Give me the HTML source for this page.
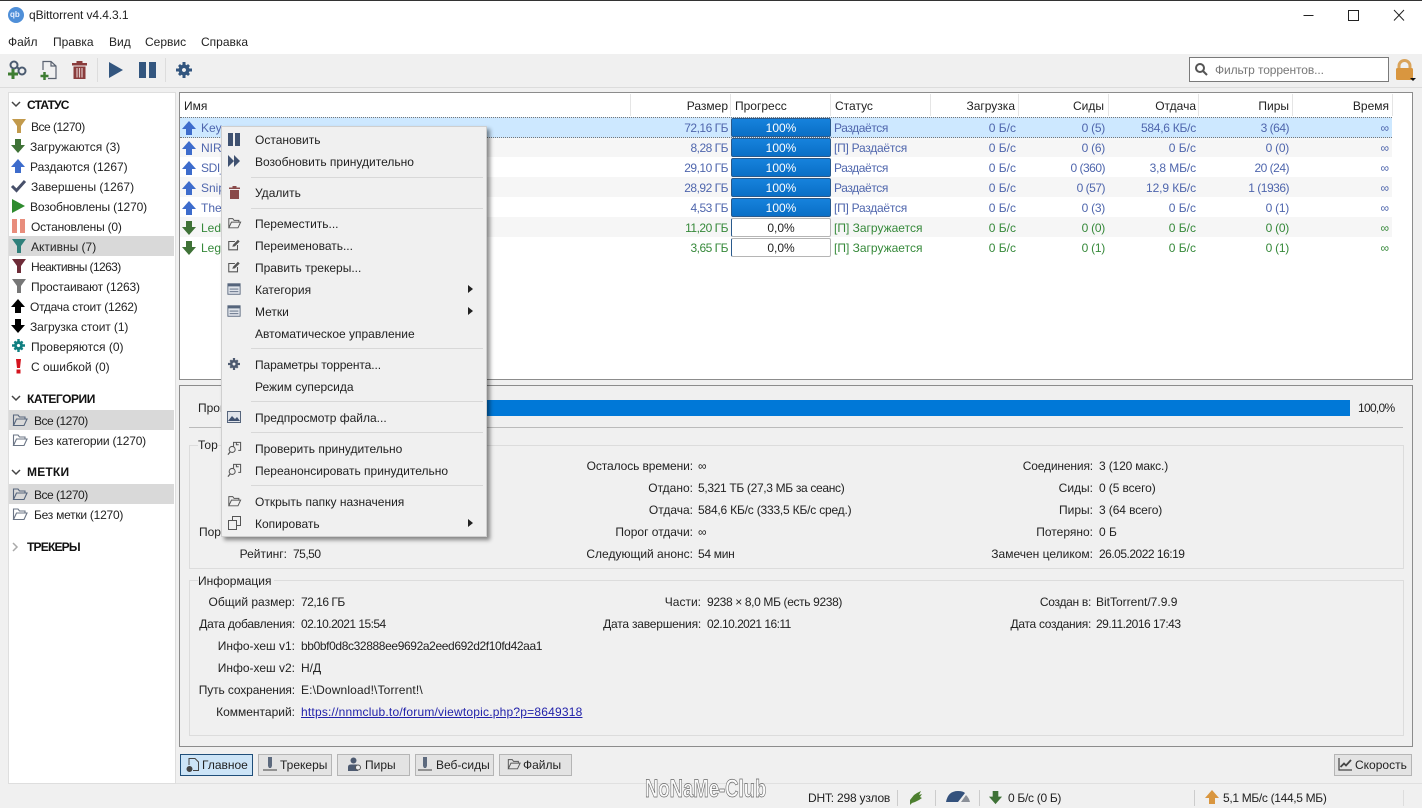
<!DOCTYPE html>
<html lang="ru"><head><meta charset="utf-8"><title>qBittorrent</title>
<style>
html,body{margin:0;padding:0}
body{width:1422px;height:808px;overflow:hidden;position:relative;background:#f0f0f0;font:12px/20px "Liberation Sans","DejaVu Sans",sans-serif;color:#222}
.t{position:absolute;white-space:nowrap;line-height:20px}
.r{text-align:right}
.b{position:absolute}
svg{position:absolute;overflow:visible}
.h{font-weight:bold;color:#111}
.bl{color:#4f66ad}.gr{color:#36893a}
.n{letter-spacing:-.5px}.m{letter-spacing:-.25px}
.sep{position:absolute;left:251px;width:232px;height:1px;background:#d8d8d8}
.btn{position:absolute;top:754px;height:20px;background:#e3e3e3;border:1px solid #b5b5b5}
.pb{position:absolute;left:731px;width:98px;height:17px;line-height:19px;background:linear-gradient(#1682dc,#0a6fc6);border:1px solid #2a5a8c;border-radius:2px;color:#fff;text-align:center}
.pw{position:absolute;left:731px;width:98px;height:17px;line-height:19px;background:#fff;border:1px solid #b5b5b5;border-left-color:#2a5a8c;border-radius:2px;color:#222;text-align:center}
</style></head><body>
<svg width="0" height="0" style="position:absolute"><defs>
<symbol id="up" viewBox="0 0 16 16"><path d="M8 1L15 9H11V15H5V9H1Z"/></symbol>
<symbol id="dn" viewBox="0 0 16 16"><path d="M5 1H11V7H15L8 15L1 7H5Z"/></symbol>
<symbol id="fu" viewBox="0 0 16 16"><path d="M1 1H15L10 8V15H6V8Z"/></symbol>
<symbol id="fo" viewBox="0 0 16 16"><path d="M1.500 13.500V3H6L7.500 5H13V7M1.500 13.500H12L15 7H4.500Z" fill="none" stroke-width="1.100"/></symbol>
<symbol id="ge" viewBox="0 0 16 16"><path d="M8 2.500A5.500 5.500 0 1 0 8.010 2.500ZM8 6A2 2 0 1 1 7.990 6Z" fill-rule="evenodd"/><path d="M6.500 0H9.500V3H6.500ZM6.500 13H9.500V16H6.500ZM0 6.500H3V9.500H0ZM13 6.500H16V9.500H13ZM2 4L4 2L6 4L4 6ZM10 4L12 2L14 4L12 6ZM2 12L4 10L6 12L4 14ZM10 12L12 10L14 12L12 14Z"/></symbol>
<symbol id="ed" viewBox="0 0 16 16"><path d="M12 8V13.500H2V4H9" fill="none" stroke="#555" stroke-width="1.200"/><path d="M6 10L7 7.500L12.500 2L14.500 4L9 9.500Z" fill="#555"/></symbol>
<symbol id="li" viewBox="0 0 16 16"><rect x="1" y="2" width="14" height="12" fill="#dfe3ea" stroke="#56657c"/><rect x="1" y="2" width="14" height="3" fill="#56657c"/><path d="M3 8H13M3 11H13" stroke="#56657c"/></symbol>
<symbol id="ck" viewBox="0 0 16 16"><path d="M10 1.500H14.500V10H12M10 1.500V4H12.500M10 1.500L7 1.500V6" fill="none" stroke="#555" stroke-width="1.100"/><circle cx="5.500" cy="9" r="3.200" fill="none" stroke="#555" stroke-width="1.100"/><path d="M3.500 11.500L1 14.500" stroke="#555" stroke-width="1.300"/></symbol>
<symbol id="pin" viewBox="0 0 16 16"><path d="M6 1H10V10L9 12H7L6 10Z" fill="#5d6a7e"/><path d="M1 14H15" stroke="#777" stroke-width="1.500"/></symbol>
</defs></svg>

<!-- title bar -->
<div class="b" style="left:0;top:0;width:1422px;height:54px;background:#fff"></div>
<div class="b" style="left:0;top:0;width:1422px;height:1px;background:#333"></div>
<div class="b" style="left:8px;top:7px;width:16px;height:16px;border-radius:50%;background:#4f8fd8"></div>
<span class="t" style="left:10px;top:5px;font-size:8px;color:#e8f0ff;font-weight:bold">qb</span>
<span class="t" style="left:29px;top:5px;letter-spacing:-.1px">qBittorrent v4.4.3.1</span>
<svg style="left:1300px;top:8px" width="110" height="16" fill="none" stroke="#222" stroke-width="1"><path d="M3.500 7.500H13.500"/><rect x="48.500" y="2.500" width="10" height="10"/><path d="M94 2L104 12.500M104 2L94 12.500"/></svg>
<span class="t" style="left:8px;top:32px">Файл</span>
<span class="t" style="left:53px;top:32px">Правка</span>
<span class="t" style="left:109px;top:32px">Вид</span>
<span class="t" style="left:145px;top:32px">Сервис</span>
<span class="t" style="left:201px;top:32px">Справка</span>

<!-- toolbar -->
<div class="b" style="left:0;top:87px;width:1422px;height:1px;background:#dcdcdc"></div>
<svg style="left:8px;top:60px" width="20" height="20"><circle cx="6" cy="5" r="3.500" fill="none" stroke="#4b5b70" stroke-width="2"/><circle cx="14" cy="11" r="3.500" fill="none" stroke="#4b5b70" stroke-width="2"/><path d="M9 7L11 9" stroke="#4b5b70" stroke-width="2"/><path d="M5 9V19M0 14H10" stroke="#3e7d32" stroke-width="3"/></svg>
<svg style="left:40px;top:60px" width="18" height="20" fill="none"><path d="M3 10V1.500H11L16 6V18.500H8M11 1.500V6H16" stroke="#5a6270" stroke-width="1.200"/><path d="M4.500 12V20M0.500 16H8.500" stroke="#3e7d32" stroke-width="2.500"/></svg>
<svg style="left:71px;top:60px" width="17" height="20"><path d="M1 3H16V5.500H1ZM5.500 1H11.500V3H5.500ZM2.500 6.500H14.500V19H2.500Z" fill="#8a3c3c"/><path d="M6 8V17.500M8.500 8V17.500M11 8V17.500" stroke="#e2c9c9" stroke-width="1.200"/></svg>
<div class="b" style="left:97px;top:58px;width:1px;height:24px;background:#ddd"></div>
<svg style="left:108px;top:61px" width="16" height="18"><path d="M1 1L15 9L1 17Z" fill="#33567f"/></svg>
<svg style="left:139px;top:62px" width="17" height="16"><path d="M0 0H7V16H0ZM10 0H17V16H10Z" fill="#33567f"/></svg>
<div class="b" style="left:165px;top:58px;width:1px;height:24px;background:#ddd"></div>
<svg style="left:176px;top:62px" width="16" height="16" fill="#33567f"><use href="#ge"/></svg>
<div class="b" style="left:1189px;top:57px;width:198px;height:23px;background:#fff;border:1px solid #7a7a7a"></div>
<svg style="left:1195px;top:63px" width="13" height="13" fill="none" stroke="#555" stroke-width="2"><circle cx="5" cy="5" r="4"/><path d="M8 8L12 12"/></svg>
<span class="t" style="left:1215px;top:60px;color:#777;letter-spacing:-.1px">Фильтр торрентов...</span>
<svg style="left:1394px;top:58px" width="24" height="24"><path d="M5 11V8A5.500 5.500 0 0 1 16 8V11" fill="none" stroke="#d9a35a" stroke-width="3"/><rect x="2" y="10" width="17" height="12" rx="1.500" fill="#d9963f"/><path d="M16 20H22L19 23Z" fill="#111"/></svg>

<!-- left panel -->
<div class="b" style="left:8px;top:92px;width:166px;height:690px;background:#fff;border:1px solid #dedede"></div>
<svg style="left:11px;top:101px" width="10" height="8" fill="none" stroke="#444" stroke-width="1.500"><path d="M1 1L5 5L9 1"/></svg>
<span class="t h" style="left:27px;top:95px;letter-spacing:-.8px">СТАТУС</span>
<svg style="left:11px;top:118px" width="16" height="16" fill="#c29a4c"><use href="#fu"/></svg><span class="t n" style="left:31px;top:117px">Все (1270)</span>
<svg style="left:10px;top:138px" width="16" height="16" fill="#3f7237"><use href="#dn"/></svg><span class="t" style="left:30px;top:137px">Загружаются (3)</span>
<svg style="left:10px;top:158px" width="16" height="16" fill="#3d6ccc"><use href="#up"/></svg><span class="t" style="left:30px;top:157px">Раздаются (1267)</span>
<svg style="left:11px;top:179px" width="15" height="14"><path d="M1 7L5.500 11.500L14 2" fill="none" stroke="#47506a" stroke-width="3"/></svg><span class="t" style="left:31px;top:177px">Завершены (1267)</span>
<svg style="left:12px;top:199px" width="13" height="14"><path d="M0 0L13 7L0 14Z" fill="#2e8b2e"/></svg><span class="t" style="left:30px;top:197px;letter-spacing:-.15px">Возобновлены (1270)</span>
<svg style="left:12px;top:219px" width="13" height="14"><path d="M0 0H5V14H0ZM8 0H13V14H8Z" fill="#e88d7c"/></svg><span class="t" style="left:31px;top:217px;letter-spacing:-.2px">Остановлены (0)</span>
<div class="b" style="left:9px;top:236px;width:165px;height:20px;background:#d9d9d9"></div>
<svg style="left:11px;top:238px" width="16" height="16" fill="#2f7f7a"><use href="#fu"/></svg><span class="t" style="left:31px;top:237px">Активны (7)</span>
<svg style="left:11px;top:258px" width="16" height="16" fill="#6e2c38"><use href="#fu"/></svg><span class="t" style="left:31px;top:257px;letter-spacing:-.6px">Неактивны (1263)</span>
<svg style="left:11px;top:278px" width="16" height="16" fill="#777"><use href="#fu"/></svg><span class="t" style="left:31px;top:277px;letter-spacing:-.17px">Простаивают (1263)</span>
<svg style="left:10px;top:298px" width="16" height="16" fill="#000"><use href="#up"/></svg><span class="t" style="left:30px;top:297px;letter-spacing:-.26px">Отдача стоит (1262)</span>
<svg style="left:10px;top:318px" width="16" height="16" fill="#000"><use href="#dn"/></svg><span class="t" style="left:30px;top:317px;letter-spacing:-.1px">Загрузка стоит (1)</span>
<svg style="left:12px;top:339px" width="13" height="13" viewBox="0 0 16 16" fill="#0f7f80"><use href="#ge"/></svg><span class="t" style="left:31px;top:337px">Проверяются (0)</span>
<svg style="left:16px;top:359px" width="5" height="15"><path d="M0 0H5L4 9H1ZM0.500 10.500H4.500V14.500H0.500Z" fill="#d4141e"/></svg><span class="t" style="left:31px;top:357px">С ошибкой (0)</span>

<svg style="left:11px;top:395px" width="10" height="8" fill="none" stroke="#444" stroke-width="1.500"><path d="M1 1L5 5L9 1"/></svg>
<span class="t h" style="left:27px;top:389px;letter-spacing:-.45px">КАТЕГОРИИ</span>
<div class="b" style="left:9px;top:410px;width:165px;height:20px;background:#d9d9d9"></div>
<svg style="left:12px;top:412px" width="16" height="16" fill="#a8bddc" stroke="#56657c"><use href="#fo"/></svg><span class="t n" style="left:34px;top:411px">Все (1270)</span>
<svg style="left:12px;top:432px" width="16" height="16" fill="none" stroke="#6b7585"><use href="#fo"/></svg><span class="t" style="left:34px;top:431px;letter-spacing:-.2px">Без категории (1270)</span>
<svg style="left:11px;top:469px" width="10" height="8" fill="none" stroke="#444" stroke-width="1.500"><path d="M1 1L5 5L9 1"/></svg>
<span class="t h" style="left:27px;top:462px;letter-spacing:.2px">МЕТКИ</span>
<div class="b" style="left:9px;top:484px;width:165px;height:20px;background:#d9d9d9"></div>
<svg style="left:12px;top:486px" width="16" height="16" fill="#a8bddc" stroke="#56657c"><use href="#fo"/></svg><span class="t n" style="left:34px;top:485px">Все (1270)</span>
<svg style="left:12px;top:506px" width="16" height="16" fill="none" stroke="#6b7585"><use href="#fo"/></svg><span class="t" style="left:34px;top:505px;letter-spacing:-.25px">Без метки (1270)</span>
<svg style="left:12px;top:542px" width="8" height="10" fill="none" stroke="#aaa" stroke-width="1.500"><path d="M1 1L5 5L1 9"/></svg>
<span class="t h" style="left:27px;top:537px;letter-spacing:-.8px">ТРЕКЕРЫ</span>

<!-- table -->
<div class="b" style="left:179px;top:92px;width:1232px;height:286px;background:#fff;border:1px solid #8c8c8c"></div>
<div class="b" style="left:180px;top:137px;width:1212px;height:20px;background:#f6f6f6"></div>
<div class="b" style="left:180px;top:177px;width:1212px;height:20px;background:#f6f6f6"></div>
<div class="b" style="left:180px;top:217px;width:1212px;height:20px;background:#f6f6f6"></div>
<div class="b" style="left:180px;top:117px;width:1212px;height:19px;background:#cde8ff;border-top:1px dotted #777;border-bottom:1px dotted #777"></div>
<div class="b" style="left:630px;top:94px;width:1px;height:22px;background:#e5e5e5"></div>
<div class="b" style="left:730px;top:94px;width:1px;height:22px;background:#e5e5e5"></div>
<div class="b" style="left:830px;top:94px;width:1px;height:22px;background:#e5e5e5"></div>
<div class="b" style="left:930px;top:94px;width:1px;height:22px;background:#e5e5e5"></div>
<div class="b" style="left:1018px;top:94px;width:1px;height:22px;background:#e5e5e5"></div>
<div class="b" style="left:1108px;top:94px;width:1px;height:22px;background:#e5e5e5"></div>
<div class="b" style="left:1198px;top:94px;width:1px;height:22px;background:#e5e5e5"></div>
<div class="b" style="left:1292px;top:94px;width:1px;height:22px;background:#e5e5e5"></div>
<div class="b" style="left:1392px;top:94px;width:1px;height:22px;background:#e5e5e5"></div>
<span class="t" style="left:184px;top:96px">Имя</span>
<span class="t r" style="right:694px;top:96px">Размер</span>
<span class="t" style="left:735px;top:96px">Прогресс</span>
<span class="t" style="left:835px;top:96px">Статус</span>
<span class="t r" style="right:407px;top:96px">Загрузка</span>
<span class="t r" style="right:318px;top:96px">Сиды</span>
<span class="t r" style="right:226px;top:96px">Отдача</span>
<span class="t r" style="right:133px;top:96px">Пиры</span>
<span class="t r" style="right:33px;top:96px">Время</span>

<!-- rows -->
<svg style="left:181px;top:120px" width="16" height="16" fill="#3d6ccc"><use href="#up"/></svg><span class="t bl" style="left:201px;top:118px">Key</span>
<svg style="left:181px;top:140px" width="16" height="16" fill="#3d6ccc"><use href="#up"/></svg><span class="t bl" style="left:201px;top:138px">NIR</span>
<svg style="left:181px;top:160px" width="16" height="16" fill="#3d6ccc"><use href="#up"/></svg><span class="t bl" style="left:201px;top:158px;letter-spacing:-.4px">SDI_</span>
<svg style="left:181px;top:180px" width="16" height="16" fill="#3d6ccc"><use href="#up"/></svg><span class="t bl" style="left:201px;top:178px">Snip</span>
<svg style="left:181px;top:200px" width="16" height="16" fill="#3d6ccc"><use href="#up"/></svg><span class="t bl" style="left:201px;top:198px">The</span>
<svg style="left:181px;top:220px" width="16" height="16" fill="#3f7237"><use href="#dn"/></svg><span class="t gr" style="left:201px;top:218px">Led</span>
<svg style="left:181px;top:240px" width="16" height="16" fill="#3f7237"><use href="#dn"/></svg><span class="t gr" style="left:201px;top:238px">Leg</span>

<span class="t r bl n" style="right:694px;top:118px">72,16 ГБ</span>
<span class="t r bl n" style="right:694px;top:138px">8,28 ГБ</span>
<span class="t r bl n" style="right:694px;top:158px">29,10 ГБ</span>
<span class="t r bl n" style="right:694px;top:178px">28,92 ГБ</span>
<span class="t r bl n" style="right:694px;top:198px">4,53 ГБ</span>
<span class="t r gr n" style="right:694px;top:218px">11,20 ГБ</span>
<span class="t r gr n" style="right:694px;top:238px">3,65 ГБ</span>

<div class="pb" style="top:118px">100%</div>
<div class="pb" style="top:138px">100%</div>
<div class="pb" style="top:158px">100%</div>
<div class="pb" style="top:178px">100%</div>
<div class="pb" style="top:198px">100%</div>
<div class="pw" style="top:218px">0,0%</div>
<div class="pw" style="top:238px">0,0%</div>

<span class="t bl" style="left:834px;top:118px;letter-spacing:-.4px">Раздаётся</span>
<span class="t bl m" style="left:834px;top:138px">[П] Раздаётся</span>
<span class="t bl" style="left:834px;top:158px;letter-spacing:-.4px">Раздаётся</span>
<span class="t bl" style="left:834px;top:178px;letter-spacing:-.4px">Раздаётся</span>
<span class="t bl m" style="left:834px;top:198px">[П] Раздаётся</span>
<span class="t gr" style="left:834px;top:218px">[П] Загружается</span>
<span class="t gr" style="left:834px;top:238px">[П] Загружается</span>

<span class="t r bl" style="right:406px;top:118px">0 Б/с</span><span class="t r bl m" style="right:317px;top:118px">0 (5)</span><span class="t r bl m" style="right:226px;top:118px">584,6 КБ/с</span><span class="t r bl n" style="right:133px;top:118px">3 (64)</span><span class="t r bl" style="right:33px;top:118px">∞</span>
<span class="t r bl" style="right:406px;top:138px">0 Б/с</span><span class="t r bl m" style="right:317px;top:138px">0 (6)</span><span class="t r bl" style="right:226px;top:138px">0 Б/с</span><span class="t r bl m" style="right:133px;top:138px">0 (0)</span><span class="t r bl" style="right:33px;top:138px">∞</span>
<span class="t r bl" style="right:406px;top:158px">0 Б/с</span><span class="t r bl n" style="right:317px;top:158px">0 (360)</span><span class="t r bl" style="right:226px;top:158px;letter-spacing:-.1px">3,8 МБ/с</span><span class="t r bl n" style="right:133px;top:158px">20 (24)</span><span class="t r bl" style="right:33px;top:158px">∞</span>
<span class="t r bl" style="right:406px;top:178px">0 Б/с</span><span class="t r bl n" style="right:317px;top:178px">0 (57)</span><span class="t r bl" style="right:226px;top:178px;letter-spacing:-.1px">12,9 КБ/с</span><span class="t r bl n" style="right:133px;top:178px">1 (1936)</span><span class="t r bl" style="right:33px;top:178px">∞</span>
<span class="t r bl" style="right:406px;top:198px">0 Б/с</span><span class="t r bl m" style="right:317px;top:198px">0 (3)</span><span class="t r bl" style="right:226px;top:198px">0 Б/с</span><span class="t r bl m" style="right:133px;top:198px">0 (1)</span><span class="t r bl" style="right:33px;top:198px">∞</span>
<span class="t r gr" style="right:406px;top:218px">0 Б/с</span><span class="t r gr m" style="right:317px;top:218px">0 (0)</span><span class="t r gr" style="right:226px;top:218px">0 Б/с</span><span class="t r gr m" style="right:133px;top:218px">0 (0)</span><span class="t r gr" style="right:33px;top:218px">∞</span>
<span class="t r gr" style="right:406px;top:238px">0 Б/с</span><span class="t r gr m" style="right:317px;top:238px">0 (1)</span><span class="t r gr" style="right:226px;top:238px">0 Б/с</span><span class="t r gr m" style="right:133px;top:238px">0 (1)</span><span class="t r gr" style="right:33px;top:238px">∞</span>

<!-- details -->
<div class="b" style="left:179px;top:385px;width:1232px;height:360px;background:#f0f0f0;border:1px solid #8c8c8c"></div>
<span class="t" style="left:198px;top:398px">Прогресс:</span>
<div class="b" style="left:300px;top:400px;width:1050px;height:16px;background:#0078d7"></div>
<span class="t" style="left:1358px;top:398px;letter-spacing:-.7px">100,0%</span>
<div class="b" style="left:189px;top:427px;width:1214px;height:1px;background:#bbb"></div>
<div class="b" style="left:189px;top:445px;width:1213px;height:122px;border:1px solid #dcdcdc"></div>
<span class="t" style="left:198px;top:435px;background:#f0f0f0;width:20px;overflow:hidden">Торрент</span>
<span class="t" style="left:199px;top:522px">Порог</span>
<span class="t r" style="right:1135px;top:544px">Рейтинг:</span><span class="t n" style="left:293px;top:544px">75,50</span>

<span class="t r" style="right:729px;top:456px;letter-spacing:-.1px">Осталось времени:</span><span class="t" style="left:698px;top:456px">∞</span>
<span class="t r" style="right:729px;top:478px">Отдано:</span><span class="t" style="left:698px;top:478px;letter-spacing:-.33px">5,321 ТБ (27,3 МБ за сеанс)</span>
<span class="t r" style="right:729px;top:500px">Отдача:</span><span class="t" style="left:698px;top:500px;letter-spacing:-.2px">584,6 КБ/с (333,5 КБ/с сред.)</span>
<span class="t r" style="right:729px;top:522px">Порог отдачи:</span><span class="t" style="left:698px;top:522px">∞</span>
<span class="t r" style="right:729px;top:544px">Следующий анонс:</span><span class="t" style="left:698px;top:544px;letter-spacing:-.3px">54 мин</span>

<span class="t r" style="right:329px;top:456px;letter-spacing:-.15px">Соединения:</span><span class="t" style="left:1099px;top:456px;letter-spacing:-.15px">3 (120 макс.)</span>
<span class="t r" style="right:329px;top:478px">Сиды:</span><span class="t" style="left:1099px;top:478px;letter-spacing:-.1px">0 (5 всего)</span>
<span class="t r" style="right:329px;top:500px">Пиры:</span><span class="t" style="left:1099px;top:500px;letter-spacing:-.1px">3 (64 всего)</span>
<span class="t r" style="right:329px;top:522px">Потеряно:</span><span class="t" style="left:1099px;top:522px">0 Б</span>
<span class="t r" style="right:329px;top:544px">Замечен целиком:</span><span class="t n" style="left:1099px;top:544px">26.05.2022 16:19</span>

<div class="b" style="left:189px;top:580px;width:1213px;height:154px;border:1px solid #dcdcdc"></div>
<span class="t" style="left:198px;top:571px;background:#f0f0f0;padding-right:3px">Информация</span>
<span class="t r" style="right:1127px;top:592px">Общий размер:</span><span class="t n" style="left:301px;top:592px">72,16 ГБ</span>
<span class="t r" style="right:1127px;top:614px;letter-spacing:-.25px">Дата добавления:</span><span class="t" style="left:301px;top:614px;letter-spacing:-.55px">02.10.2021 15:54</span>
<span class="t r" style="right:1127px;top:636px">Инфо-хеш v1:</span><span class="t" style="left:301px;top:636px;letter-spacing:-.38px">bb0bf0d8c32888ee9692a2eed692d2f10fd42aa1</span>
<span class="t r" style="right:1127px;top:658px">Инфо-хеш v2:</span><span class="t" style="left:301px;top:658px">Н/Д</span>
<span class="t r" style="right:1127px;top:680px;letter-spacing:-.12px">Путь сохранения:</span><span class="t" style="left:301px;top:680px;letter-spacing:.14px">E:\Download!\Torrent!\</span>
<span class="t r" style="right:1127px;top:702px">Комментарий:</span><span class="t" style="left:301px;top:702px;color:#2222aa;text-decoration:underline;letter-spacing:.2px">https://nnmclub.to/forum/viewtopic.php?p=8649318</span>
<span class="t r" style="right:721px;top:592px">Части:</span><span class="t" style="left:707px;top:592px;letter-spacing:-.36px">9238 × 8,0 МБ (есть 9238)</span>
<span class="t r" style="right:721px;top:614px;letter-spacing:-.2px">Дата завершения:</span><span class="t" style="left:707px;top:614px;letter-spacing:-.55px">02.10.2021 16:11</span>
<span class="t r" style="right:331px;top:592px;letter-spacing:-.3px">Создан в:</span><span class="t" style="left:1096px;top:592px">BitTorrent/7.9.9</span>
<span class="t r" style="right:331px;top:614px;letter-spacing:-.3px">Дата создания:</span><span class="t n" style="left:1096px;top:614px">29.11.2016 17:43</span>

<!-- bottom buttons -->
<div class="btn" style="left:180px;width:71px;background:#cce4f7;border-color:#1f4e79"></div>
<svg style="left:185px;top:757px" width="15" height="16" fill="none" stroke="#444"><path d="M4 8V1.500H10L13.500 5V13.500H8"/><circle cx="4.500" cy="12" r="2.500" fill="#444"/></svg>
<span class="t" style="left:202px;top:755px">Главное</span>
<div class="btn" style="left:258px;width:72px"></div><svg style="left:262px;top:756px" width="16" height="16"><use href="#pin"/></svg><span class="t" style="left:280px;top:755px">Трекеры</span>
<div class="btn" style="left:337px;width:71px"></div><svg style="left:348px;top:757px" width="14" height="15"><circle cx="5.500" cy="3.500" r="3" fill="#4d5a70"/><path d="M0 14V10Q0 7.500 3 7.500H8Q10 7.500 10 9V14Z" fill="#4d5a70"/><circle cx="10" cy="10.500" r="2.500" fill="#f0f0f0" stroke="#555"/></svg><span class="t" style="left:365px;top:755px">Пиры</span>
<div class="btn" style="left:415px;width:77px"></div><svg style="left:417px;top:756px" width="16" height="16"><use href="#pin"/></svg><span class="t" style="left:436px;top:755px">Веб-сиды</span>
<div class="btn" style="left:499px;width:71px"></div><svg style="left:507px;top:757px" width="14" height="14" viewBox="0 0 16 16" fill="none" stroke="#555"><use href="#fo"/></svg><span class="t" style="left:523px;top:755px">Файлы</span>
<div class="btn" style="left:1334px;width:76px"></div><svg style="left:1338px;top:757px" width="14" height="14" fill="none" stroke="#444" stroke-width="1.200"><path d="M1 1V13H14"/><path d="M2.500 10L6 6.500L8 8.500L13 3" stroke-width="1.800"/></svg><span class="t" style="left:1355px;top:755px">Скорость</span>

<!-- white strip above status -->
<div class="b" style="left:176px;top:783px;width:1246px;height:1px;background:#e0e0e0"></div>
<div class="b" style="left:8px;top:783px;width:168px;height:1px;background:#dedede"></div>

<!-- status bar -->
<span class="t" style="left:645px;top:779px;font-size:25px;font-weight:bold;color:#fafafa;-webkit-text-stroke:.7px #666;transform:scaleX(.74);transform-origin:0 50%">NoNaMe-Club</span>
<span class="t" style="left:808px;top:788px;letter-spacing:-.2px">DHT: 298 узлов</span>
<div class="b" style="left:897px;top:790px;width:1px;height:16px;background:#ccc"></div>
<svg style="left:909px;top:790px" width="15" height="15"><path d="M1 10L5 5L8 3L12 1L10 5L13 4L11 7L13 8L10 10L6 12L3 13L1 15Z" fill="#4d7f2f"/></svg>
<div class="b" style="left:935px;top:790px;width:1px;height:16px;background:#ccc"></div>
<svg style="left:945px;top:790px" width="26" height="13"><path d="M1 12Q3 1 13 1Q18 1 20 3L13 12Z" fill="#34527d"/><path d="M21 5Q24 8 25 12H16Z" fill="#8a8f98"/></svg>
<div class="b" style="left:979px;top:790px;width:1px;height:16px;background:#ccc"></div>
<svg style="left:988px;top:790px" width="15" height="15" fill="#3f7237"><use href="#dn"/></svg>
<span class="t" style="left:1008px;top:788px;letter-spacing:-.3px">0 Б/с (0 Б)</span>
<div class="b" style="left:1194px;top:790px;width:1px;height:16px;background:#ccc"></div>
<svg style="left:1204px;top:789px" width="16" height="16" fill="#d9963f"><use href="#up"/></svg>
<span class="t" style="left:1223px;top:788px;letter-spacing:-.33px">5,1 МБ/с (144,5 МБ)</span>
<div class="b" style="left:1403px;top:790px;width:1px;height:16px;background:#ddd"></div>

<!-- context menu -->
<div class="b" style="left:221px;top:126px;width:264px;height:409px;background:#f0f0f0;border:1px solid #cfcfcf;box-shadow:3px 3px 4px rgba(0,0,0,.45)"></div>
<svg style="left:228px;top:133px" width="12" height="13"><path d="M0 0H5V13H0ZM7 0H12V13H7Z" fill="#3f5170"/></svg>
<span class="t" style="left:255px;top:130px">Остановить</span>
<svg style="left:228px;top:155px" width="12" height="12"><path d="M0 0L6 6L0 12ZM6 0L12 6L6 12Z" fill="#3f5170"/></svg>
<span class="t" style="left:255px;top:152px">Возобновить принудительно</span>
<div class="sep" style="top:177px"></div>
<svg style="left:229px;top:186px" width="11" height="13"><path d="M0 1.500H11V3H0ZM3.500 0H7.500V1.500H3.500ZM1 4H10V13H1Z" fill="#8a4a4a"/></svg>
<span class="t" style="left:255px;top:183px">Удалить</span>
<div class="sep" style="top:208px"></div>
<svg style="left:227px;top:216px" width="15" height="14" viewBox="0 0 16 16" fill="none" stroke="#555"><use href="#fo"/></svg>
<span class="t" style="left:255px;top:214px">Переместить...</span>
<svg style="left:227px;top:238px" width="14" height="14"><use href="#ed"/></svg>
<span class="t" style="left:255px;top:236px">Переименовать...</span>
<svg style="left:227px;top:260px" width="14" height="14"><use href="#ed"/></svg>
<span class="t" style="left:255px;top:258px">Править трекеры...</span>
<svg style="left:227px;top:282px" width="14" height="14"><use href="#li"/></svg>
<span class="t" style="left:255px;top:280px">Категория</span>
<svg style="left:468px;top:285px" width="5" height="8"><path d="M0 0L5 4L0 8Z" fill="#222"/></svg>
<svg style="left:227px;top:304px" width="14" height="14"><use href="#li"/></svg>
<span class="t" style="left:255px;top:302px">Метки</span>
<svg style="left:468px;top:307px" width="5" height="8"><path d="M0 0L5 4L0 8Z" fill="#222"/></svg>
<span class="t" style="left:255px;top:324px">Автоматическое управление</span>
<div class="sep" style="top:348px"></div>
<svg style="left:228px;top:358px" width="12" height="12" viewBox="0 0 16 16" fill="#4d5a70"><use href="#ge"/></svg>
<span class="t" style="left:255px;top:355px;letter-spacing:-.1px">Параметры торрента...</span>
<span class="t" style="left:255px;top:377px">Режим суперсида</span>
<div class="sep" style="top:401px"></div>
<svg style="left:227px;top:411px" width="14" height="12"><rect x=".5" y=".5" width="13" height="11" fill="#dfe3ea" stroke="#56657c"/><path d="M1 10L5 5L8 8L10 6L13 10Z" fill="#3f5170"/></svg>
<span class="t" style="left:255px;top:408px">Предпросмотр файла...</span>
<div class="sep" style="top:432px"></div>
<svg style="left:227px;top:441px" width="15" height="15"><use href="#ck"/></svg>
<span class="t" style="left:255px;top:439px">Проверить принудительно</span>
<svg style="left:227px;top:463px" width="15" height="15"><use href="#ck"/></svg>
<span class="t" style="left:255px;top:461px">Переанонсировать принудительно</span>
<div class="sep" style="top:485px"></div>
<svg style="left:227px;top:494px" width="15" height="14" viewBox="0 0 16 16" fill="none" stroke="#555"><use href="#fo"/></svg>
<span class="t" style="left:255px;top:492px">Открыть папку назначения</span>
<svg style="left:228px;top:516px" width="13" height="14" fill="#f0f0f0" stroke="#555"><path d="M4.500 .5H12.500V9.500H4.500Z"/><path d="M.5 4.500H8.500V13.500H.5Z"/></svg>
<span class="t" style="left:255px;top:514px">Копировать</span>
<svg style="left:468px;top:519px" width="5" height="8"><path d="M0 0L5 4L0 8Z" fill="#222"/></svg>
</body></html>
